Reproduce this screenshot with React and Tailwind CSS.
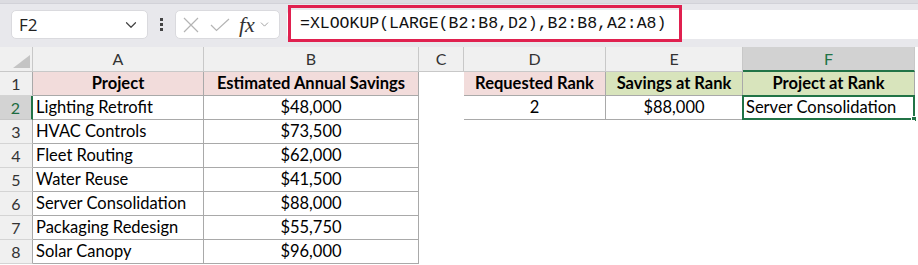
import { ChevronDown } from 'lucide-react'

const cols = [
  { key: 'A', w: 171 },
  { key: 'B', w: 215 },
  { key: 'C', w: 45 },
  { key: 'D', w: 142 },
  { key: 'E', w: 137 },
  { key: 'F', w: 172 },
]

const projects = [
  ['Lighting Retrofit', '$48,000'],
  ['HVAC Controls', '$73,500'],
  ['Fleet Routing', '$62,000'],
  ['Water Reuse', '$41,500'],
  ['Server Consolidation', '$88,000'],
  ['Packaging Redesign', '$55,750'],
  ['Solar Canopy', '$96,000'],
]

const pink = 'bg-[#f2dcdb]'
const green = 'bg-[#d8e4bc]'

// cell content for row r (1-based), column key
function cellFor(r, key) {
  if (r === 1) {
    if (key === 'A') return { text: 'Project', bold: true, center: true, fill: pink, table: true }
    if (key === 'B') return { text: 'Estimated Annual Savings', bold: true, center: true, fill: pink, table: true }
    if (key === 'D') return { text: 'Requested Rank', bold: true, center: true, fill: pink, table: true }
    if (key === 'E') return { text: 'Savings at Rank', bold: true, center: true, fill: green, table: true }
    if (key === 'F') return { text: 'Project at Rank', bold: true, center: true, fill: green, table: true }
  }
  if (r === 2) {
    if (key === 'D') return { text: '2', center: true, table: true }
    if (key === 'E') return { text: '$88,000', center: true, table: true }
    if (key === 'F') return { text: 'Server Consolidation', table: true, selected: true }
  }
  if (r >= 2 && r <= 8) {
    const p = projects[r - 2]
    if (key === 'A') return { text: p[0], table: true }
    if (key === 'B') return { text: p[1], center: true, table: true }
  }
  return { text: '' }
}

function Cell({ r, c, idx }) {
  const cell = cellFor(r, c.key)
  const next = cols[idx + 1] && cellFor(r, cols[idx + 1].key)
  const rightLine = cell.table || (next && next.table)
  return (
    <div
      className={`relative h-[24px] flex items-center text-[16.5px] text-black leading-none whitespace-nowrap ${cell.fill || 'bg-white'} ${
        cell.center ? 'justify-center' : 'pl-[3px]'
      } ${cell.bold ? 'font-bold' : ''} ${rightLine ? 'border-r border-[#a9a9a9]' : 'border-r border-transparent'} ${
        cell.table ? 'border-b border-[#a9a9a9]' : 'border-b border-transparent'
      }`}
    >
      {cell.text}
      {cell.selected && (
        <div className="absolute -left-[1px] -top-[1px] -right-[1px] -bottom-[1px] border-2 border-[#217346]">
          <div className="absolute -right-[4px] -bottom-[4px] w-[6px] h-[6px] bg-[#217346] border border-white" />
        </div>
      )}
    </div>
  )
}

export default function App() {
  return (
    <div className="w-[918px] h-[265px] overflow-hidden bg-white font-['Lato',sans-serif]">
      {/* formula bar */}
      <div className="h-[47px] bg-[#e8e8ec] relative">
        <div className="h-[4px] bg-[#dcdce1] border-b border-[#d2d2d8]" />
        <div className="flex items-start pt-[6px] pl-[11px]">
          <div className="w-[137px] h-[29px] bg-white rounded-[5px] border border-[#dadade] flex items-center justify-between pl-[7px] pr-[7px]">
            <span className="text-[17px] text-[#222] font-['Open_Sans',sans-serif]">F2</span>
            <ChevronDown size={18} strokeWidth={1.6} className="text-[#444]" />
          </div>
          <div className="w-[27px] h-[29px] flex flex-col items-center justify-center gap-[2px]">
            <span className="w-[3px] h-[3px] bg-[#444]" />
            <span className="w-[3px] h-[3px] bg-[#444]" />
            <span className="w-[3px] h-[3px] bg-[#444]" />
          </div>
          <div className="w-[105px] h-[29px] bg-white rounded-[5px] border border-[#dadade] flex items-center pl-[7px]">
            <svg width="16" height="16" viewBox="0 0 16 16" className="mr-[11px]">
              <path d="M1 1L15 15M15 1L1 15" stroke="#b4b4b4" strokeWidth="1.2" fill="none" />
            </svg>
            <svg width="20" height="14" viewBox="0 0 20 14" className="mr-[9px]">
              <path d="M1 7L6.5 12.5L19 1" stroke="#b4b4b4" strokeWidth="1.2" fill="none" />
            </svg>
            <span className="text-[22px] italic text-[#333] font-['Liberation_Serif',serif] leading-none">fx</span>
            <ChevronDown size={13} strokeWidth={1.4} className="text-[#888] ml-[3px]" />
          </div>
          <div className="ml-[7px] flex-1 h-[29px] bg-white rounded-l-[5px] flex items-center pl-[13px]">
            <span className="text-[16.5px] text-[#111] font-['Liberation_Mono',monospace] leading-none">
              =XLOOKUP(LARGE(B2:B8,D2),B2:B8,A2:A8)
            </span>
          </div>
        </div>
        <div className="absolute left-[288px] top-[5px] w-[394px] h-[37px] border-[3px] border-[#e0204f]" />
      </div>

      {/* sheet */}
      <div className="grid grid-cols-[33px_171px_215px_45px_142px_137px_172px]">
        {/* column headers */}
        <div className="h-[25px] bg-[#f0f0f0] border-r border-b border-[#c8c8c8] flex items-end justify-end pr-[2px] pb-[3px]">
          <svg width="17" height="13" viewBox="0 0 17 13">
            <path d="M17 0V13H0Z" fill="#c4c4c4" />
          </svg>
        </div>
        {cols.map((c) =>
          c.key === 'F' ? (
            <div
              key={c.key}
              className="h-[25px] bg-[#d2d2d2] border-b-2 border-[#217346] border-r border-r-[#c8c8c8] flex items-center justify-center text-[16px] text-[#217346]"
            >
              {c.key}
            </div>
          ) : (
            <div
              key={c.key}
              className="h-[25px] bg-[#f0f0f0] border-r border-b border-[#c8c8c8] flex items-center justify-center text-[16px] text-[#333]"
            >
              {c.key}
            </div>
          )
        )}

        {[1, 2, 3, 4, 5, 6, 7, 8].map((r) => (
          <div key={r} className="contents">
            {r === 2 ? (
              <div className="h-[24px] bg-[#d3d3d3] border-r-2 border-[#217346] border-b border-b-[#c8c8c8] flex items-center justify-center text-[16px] text-[#1e6b41]">
                {r}
              </div>
            ) : (
              <div className="h-[24px] bg-[#f0f0f0] border-r border-b border-[#d4d4d4] border-r-[#a9a9a9] flex items-center justify-center text-[16px] text-[#333]">
                {r}
              </div>
            )}
            {cols.map((c, i) => (
              <Cell key={c.key} r={r} c={c} idx={i} />
            ))}
          </div>
        ))}
      </div>
    </div>
  )
}
